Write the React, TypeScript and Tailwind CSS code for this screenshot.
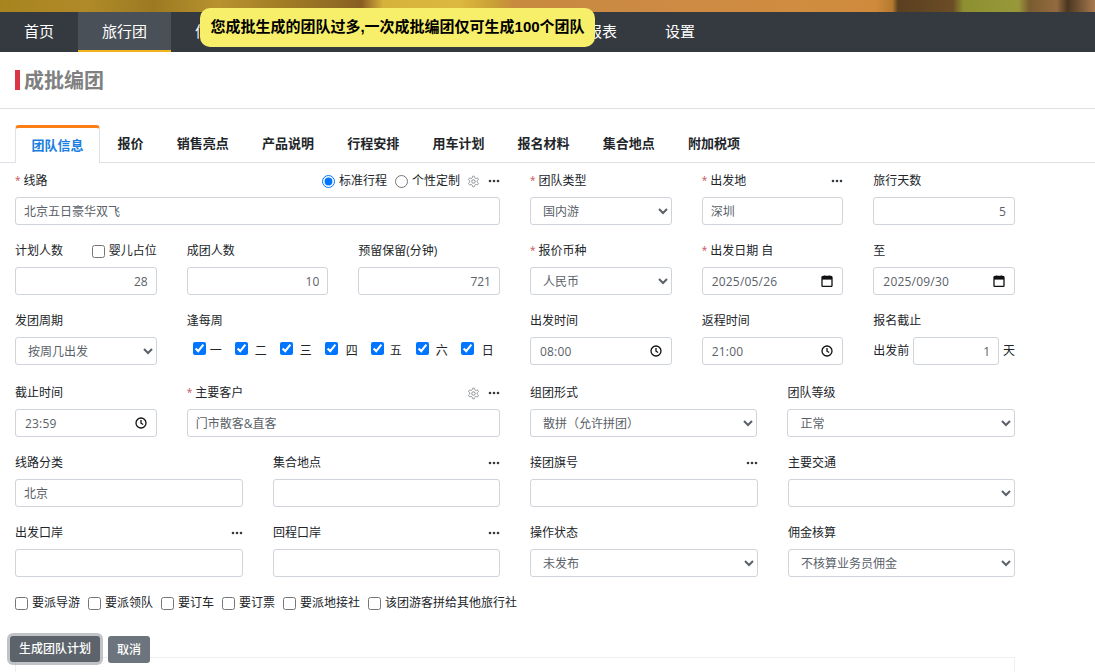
import React from "react";

const inputCls =
  "block w-full h-[28px] rounded-[3px] border border-[#ced4da] bg-white px-2 text-[12px] text-[#5a6168] outline-none";
const selectCls =
  "block w-full h-[28px] rounded-[3px] border border-[#ced4da] bg-white pl-2 text-[12px] text-[#5a6168] outline-none";

function Dots() {
  return (
    <svg width="12" height="4" viewBox="0 0 12 4" className="block">
      <circle cx="2" cy="2" r="1.3" fill="#343a40" />
      <circle cx="6" cy="2" r="1.3" fill="#343a40" />
      <circle cx="10" cy="2" r="1.3" fill="#343a40" />
    </svg>
  );
}

function Gear() {
  return (
    <svg width="13" height="13" viewBox="0 0 24 24" fill="none" stroke="#868c92" strokeWidth="1.8" className="block">
      <path d="M12.2 2h-.4a2 2 0 0 0-2 2v.2a2 2 0 0 1-1 1.7l-.4.3a2 2 0 0 1-2 0l-.2-.1a2 2 0 0 0-2.7.7l-.2.4a2 2 0 0 0 .7 2.7l.2.1a2 2 0 0 1 1 1.7v.5a2 2 0 0 1-1 1.7l-.2.1a2 2 0 0 0-.7 2.7l.2.4a2 2 0 0 0 2.7.7l.2-.1a2 2 0 0 1 2 0l.4.3a2 2 0 0 1 1 1.7v.2a2 2 0 0 0 2 2h.4a2 2 0 0 0 2-2v-.2a2 2 0 0 1 1-1.7l.4-.3a2 2 0 0 1 2 0l.2.1a2 2 0 0 0 2.7-.7l.2-.4a2 2 0 0 0-.7-2.7l-.2-.1a2 2 0 0 1-1-1.7v-.5a2 2 0 0 1 1-1.7l.2-.1a2 2 0 0 0 .7-2.7l-.2-.4a2 2 0 0 0-2.7-.7l-.2.1a2 2 0 0 1-2 0l-.4-.3a2 2 0 0 1-1-1.7V4a2 2 0 0 0-2-2z" />
      <circle cx="12" cy="12" r="3.2" />
    </svg>
  );
}

function Cal() {
  return (
    <svg width="12" height="12" viewBox="0 0 12 12" className="block">
      <path d="M2 1.5h8a1 1 0 0 1 1 1v8a1 1 0 0 1-1 1H2a1 1 0 0 1-1-1v-8a1 1 0 0 1 1-1z" fill="none" stroke="#111" strokeWidth="1.3" />
      <rect x="1" y="2" width="10" height="2.6" fill="#111" />
      <rect x="3" y="0.6" width="1.4" height="2" fill="#111" />
      <rect x="7.6" y="0.6" width="1.4" height="2" fill="#111" />
    </svg>
  );
}

function Clock() {
  return (
    <svg width="12" height="12" viewBox="0 0 12 12" fill="none" stroke="#111" strokeWidth="1.3" className="block">
      <circle cx="6" cy="6" r="5" />
      <path d="M6 3v3.2l2.2 1.3" />
    </svg>
  );
}

function Req() {
  return <span className="text-[#c8505a] mr-[3px] text-[10px] relative -top-[1px]">*</span>;
}

function Label({ req, children, right }: { req?: boolean; children?: React.ReactNode; right?: React.ReactNode }) {
  return (
    <div className="h-[18px] mb-[7px] flex items-center justify-between text-[12px] leading-[18px] text-[#212529]">
      <span className="h-[18px] flex items-center">
        {req && <Req />}
        {children}
      </span>
      {right && <span className="flex items-center gap-[8px]">{right}</span>}
    </div>
  );
}

function TextInput({ value = "", right = false }: { value?: string; right?: boolean }) {
  return <input readOnly value={value} className={inputCls + (right ? " text-right" : "")} />;
}

function Sel({ value = "" }: { value?: string }) {
  return (
    <select className={selectCls} defaultValue={value}>
      <option value={value}>{value}</option>
    </select>
  );
}

function IconInput({ value, icon }: { value: string; icon: React.ReactNode }) {
  return (
    <div className="h-[28px] rounded-[3px] border border-[#ced4da] bg-white pl-[9px] pr-[9px] flex items-center justify-between text-[12px] text-[#5a6168] tracking-[0.2px]">
      <span className="pt-[1px]">{value}</span>
      {icon}
    </div>
  );
}

const tabs = ["报价", "销售亮点", "产品说明", "行程安排", "用车计划", "报名材料", "集合地点", "附加税项"];
const week = [
  { t: "一", w: "w-[42px]", m: "ml-[4px]" },
  { t: "二", w: "w-[45px]", m: "ml-[7px]" },
  { t: "三", w: "w-[45px]", m: "ml-[7px]" },
  { t: "四", w: "w-[46px]", m: "ml-[8px]" },
  { t: "五", w: "w-[45px]", m: "ml-[6px]" },
  { t: "六", w: "w-[45px]", m: "ml-[7px]" },
  { t: "日", w: "w-[45px]", m: "ml-[8px]" },
];
const bottomChecks = ["要派导游", "要派领队", "要订车", "要订票", "要派地接社", "该团游客拼给其他旅行社"];

export default function App() {
  return (
    <div
      className="relative w-[1095px] h-[672px] overflow-hidden bg-white text-[12px] text-[#212529]"
      style={{ fontFamily: '"Open Sans", "Noto Sans CJK SC", sans-serif' }}
    >
      <div className="h-[12px] bg-[linear-gradient(90deg,#a8841f_0%,#b08a28_8%,#9c7a22_14%,#b8922e_20%,#a27c24_26%,#8f6a24_31%,#8a5c22_33%,#d6b23c_35%,#dcb83e_42%,#c9a035_45%,#c78a3e_47%,#cc8a44_60%,#d08c40_72%,#cf8a3c_80%,#b47a2e_81.5%,#5a4020_82%,#6b4c26_87%,#8e9030_88%,#98983a_93%,#7a5c30_94%,#946a40_96.5%,#4a3620_97.5%,#a87b50_100%)]" />
      <div className="h-[40px] bg-[#343a40] flex text-white text-[15px]">
        <div className="w-[78px] h-full flex items-center justify-center pb-[2px]">首页</div>
        <div className="w-[93px] h-full flex items-center justify-center bg-[#495057] border-b-2 border-[#f0b41c]">旅行团</div>
        <div className="w-[29px] h-full pl-[24px] flex items-center overflow-hidden whitespace-nowrap pb-[2px]">信息</div>
        <div className="absolute left-[587px] top-[12px] h-[40px] flex items-center pb-[2px]">报表</div>
        <div className="absolute left-[665px] top-[12px] h-[40px] flex items-center pb-[2px]">设置</div>
      </div>

      <div
        className="absolute left-[200px] top-[8px] w-[395px] h-[39px] rounded-[10px] bg-[#f7ee6a] flex items-center justify-center text-[15px] font-bold text-black whitespace-nowrap"
        style={{ fontFamily: '"Liberation Sans", "Noto Sans CJK SC", sans-serif' }}
      >
        您成批生成的团队过多,一次成批编团仅可生成100个团队
      </div>

      <div className="h-[57px] border-b border-[#dee2e6] relative">
        <div className="absolute left-[15px] top-[18px] w-[5px] h-[20px] bg-[#dc3545]" />
        <div className="absolute left-[24px] top-[15px] text-[20px] leading-[28px] font-bold text-[#808080]">成批编团</div>
      </div>

      <div className="absolute left-0 right-0 top-[125px] h-[38px] border-b border-[#dee2e6] flex pl-[15px] text-[13px] font-bold text-[#212529]">
        <div className="w-[85px] mr-[1px] h-[38px] border-x border-[#dee2e6] border-t-[3px] border-t-[#fd7e14] rounded-t-[4px] bg-white text-[#1a7fe0] flex items-center justify-center pt-[1px]">
          团队信息
        </div>
        {tabs.map((t) => (
          <div key={t} className="px-[16.6px] h-[38px] flex items-center">
            {t}
          </div>
        ))}
      </div>

      <div className="absolute left-[15px] top-[172px] w-[1000px] grid grid-cols-12 gap-x-[30px]">
        {/* row 1 */}
        <div className="col-span-6">
          <Label
            req
            right={
              <>
                <span className="flex items-center gap-[4px]">
                  <input type="radio" name="r" defaultChecked className="m-0 w-[13px] h-[13px]" />
                  标准行程
                </span>
                <span className="flex items-center gap-[4px]">
                  <input type="radio" name="r" className="m-0 w-[13px] h-[13px]" />
                  个性定制
                </span>
                <span className="-ml-[1px]">
                  <Gear />
                </span>
                <Dots />
              </>
            }
          >
            线路
          </Label>
          <TextInput value="北京五日豪华双飞" />
        </div>
        <div className="col-span-2">
          <Label req>团队类型</Label>
          <Sel value="国内游" />
        </div>
        <div className="col-span-2">
          <Label req right={<Dots />}>出发地</Label>
          <TextInput value="深圳" />
        </div>
        <div className="col-span-2">
          <Label>旅行天数</Label>
          <TextInput value="5" right />
        </div>

        {/* row 2 */}
        <div className="col-span-2 mt-[17px]">
          <Label
            right={
              <span className="flex items-center gap-[4px]">
                <input type="checkbox" className="m-0 w-[13px] h-[13px]" />
                婴儿占位
              </span>
            }
          >
            计划人数
          </Label>
          <TextInput value="28" right />
        </div>
        <div className="col-span-2 mt-[17px]">
          <Label>成团人数</Label>
          <TextInput value="10" right />
        </div>
        <div className="col-span-2 mt-[17px]">
          <Label>预留保留(分钟)</Label>
          <TextInput value="721" right />
        </div>
        <div className="col-span-2 mt-[17px]">
          <Label req>报价币种</Label>
          <Sel value="人民币" />
        </div>
        <div className="col-span-2 mt-[17px]">
          <Label req>出发日期 自</Label>
          <IconInput value="2025/05/26" icon={<Cal />} />
        </div>
        <div className="col-span-2 mt-[17px]">
          <Label>至</Label>
          <IconInput value="2025/09/30" icon={<Cal />} />
        </div>

        {/* row 3 */}
        <div className="col-span-2 mt-[17px]">
          <Label>发团周期</Label>
          <Sel value="按周几出发" />
        </div>
        <div className="col-span-4 mt-[17px]">
          <Label>逢每周</Label>
          <div className="h-[28px] flex items-center pl-[6px]">
            {week.map((d) => (
              <div key={d.t} className={"flex items-center shrink-0 " + d.w}>
                <input type="checkbox" defaultChecked className="m-0 w-[13px] h-[13px] -translate-y-[3px]" />
                <span className={d.m}>{d.t}</span>
              </div>
            ))}
          </div>
        </div>
        <div className="col-span-2 mt-[17px]">
          <Label>出发时间</Label>
          <IconInput value="08:00" icon={<Clock />} />
        </div>
        <div className="col-span-2 mt-[17px]">
          <Label>返程时间</Label>
          <IconInput value="21:00" icon={<Clock />} />
        </div>
        <div className="col-span-2 mt-[17px]">
          <Label>报名截止</Label>
          <div className="flex items-center justify-between">
            <span>出发前</span>
            <input readOnly value="1" className="h-[28px] w-[86px] rounded-[3px] border border-[#ced4da] px-2 text-right text-[12px] text-[#5a6168] outline-none" />
            <span>天</span>
          </div>
        </div>

        {/* row 4 */}
        <div className="col-span-2 mt-[19px]">
          <Label>截止时间</Label>
          <IconInput value="23:59" icon={<Clock />} />
        </div>
        <div className="col-span-4 mt-[19px]">
          <Label
            req
            right={
              <>
                <Gear />
                <Dots />
              </>
            }
          >
            主要客户
          </Label>
          <TextInput value="门市散客&直客" />
        </div>
        <div className="col-span-3 mt-[19px]">
          <Label>组团形式</Label>
          <Sel value="散拼（允许拼团）" />
        </div>
        <div className="col-span-3 mt-[19px]">
          <Label>团队等级</Label>
          <Sel value="正常" />
        </div>

        {/* row 5 */}
        <div className="col-span-3 mt-[17px] w-[228px]">
          <Label>线路分类</Label>
          <TextInput value="北京" />
        </div>
        <div className="col-span-3 mt-[17px] ml-[0.5px]">
          <Label right={<Dots />}>集合地点</Label>
          <TextInput />
        </div>
        <div className="col-span-3 mt-[17px] w-[228px]">
          <Label right={<Dots />}>接团旗号</Label>
          <TextInput />
        </div>
        <div className="col-span-3 mt-[17px] ml-[0.5px]">
          <Label>主要交通</Label>
          <Sel />
        </div>

        {/* row 6 */}
        <div className="col-span-3 mt-[17px] w-[228px]">
          <Label right={<Dots />}>出发口岸</Label>
          <TextInput />
        </div>
        <div className="col-span-3 mt-[17px] ml-[0.5px]">
          <Label right={<Dots />}>回程口岸</Label>
          <TextInput />
        </div>
        <div className="col-span-3 mt-[17px] w-[228px]">
          <Label>操作状态</Label>
          <Sel value="未发布" />
        </div>
        <div className="col-span-3 mt-[17px] ml-[0.5px]">
          <Label>佣金核算</Label>
          <Sel value="不核算业务员佣金" />
        </div>
      </div>

      <div className="absolute left-[15px] top-[594px] h-[18px] flex items-center gap-[8px]">
        {bottomChecks.map((c) => (
          <span key={c} className="flex items-center gap-[4px]">
            <input type="checkbox" className="m-0 w-[13px] h-[13px]" />
            {c}
          </span>
        ))}
      </div>

      <div className="absolute left-[15px] top-[657px] w-[1000px] h-[20px] border border-[#eeeeee]" />

      <div className="absolute left-[10px] top-[636px] h-[26px] w-[90px] rounded-[3px] bg-[#5c636a] ring-[3px] ring-[#828a91]/50 text-white font-medium flex items-center justify-center">
        生成团队计划
      </div>
      <div className="absolute left-[108px] top-[636px] h-[27px] w-[42px] rounded-[3px] bg-[#6c757d] text-white font-medium flex items-center justify-center">
        取消
      </div>
    </div>
  );
}
